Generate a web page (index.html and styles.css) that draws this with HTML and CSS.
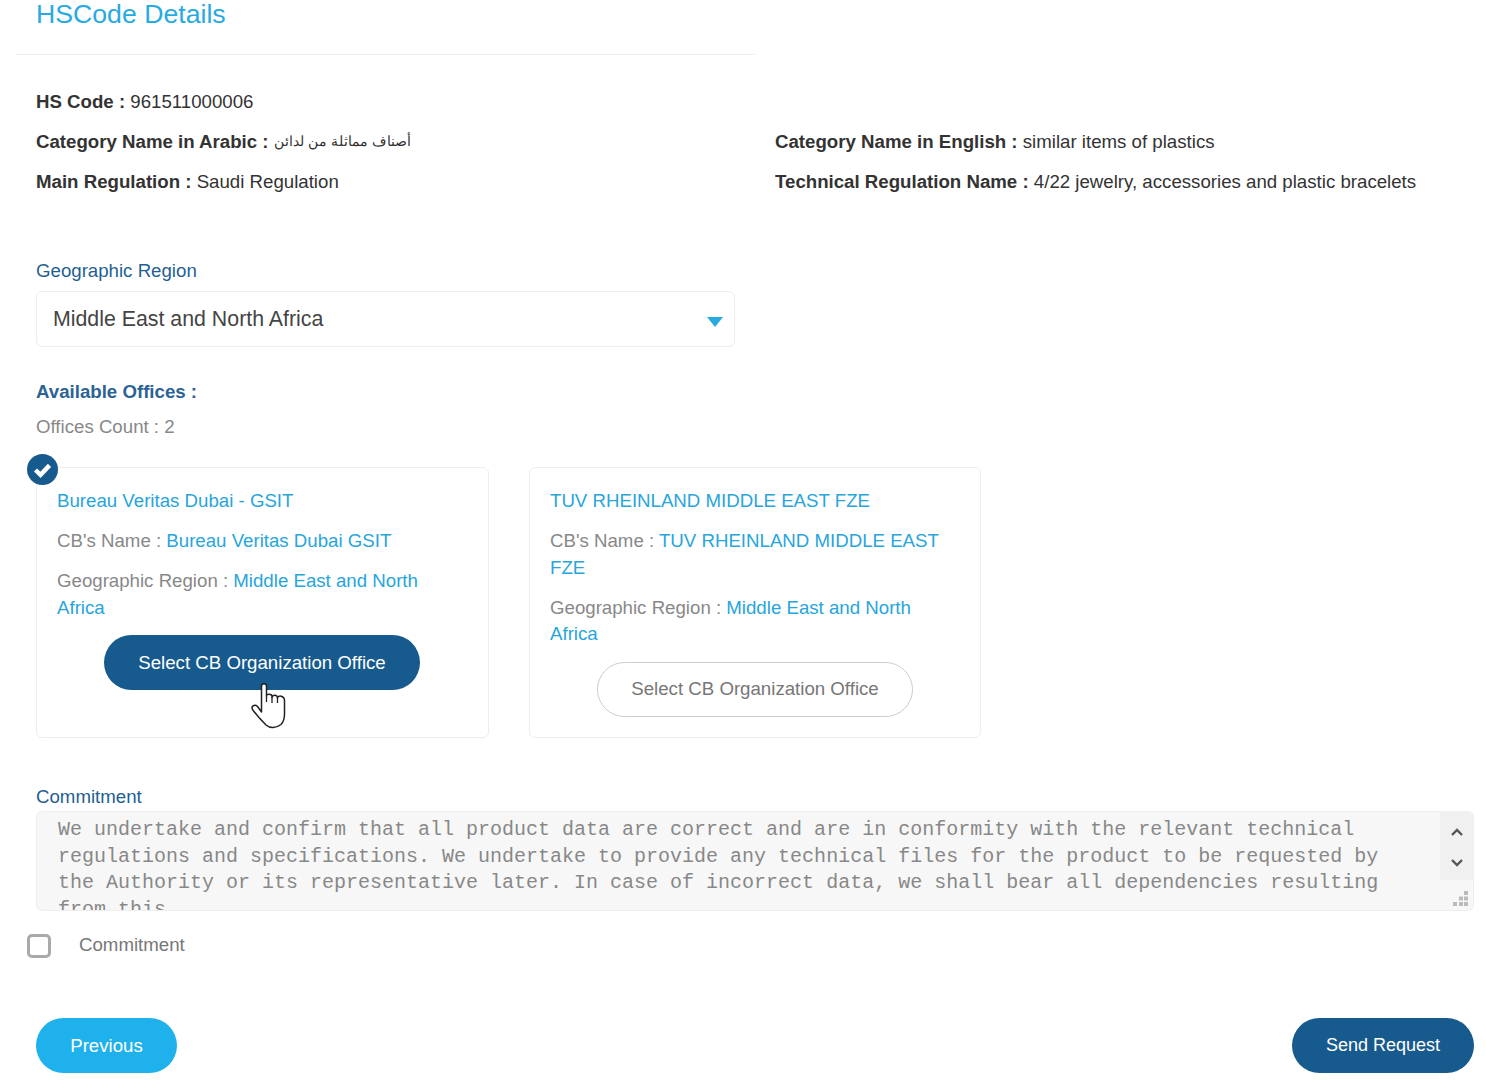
FILE: index.html
```html
<!DOCTYPE html>
<html lang="en">
<head>
    <meta charset="UTF-8">
    <meta name="viewport" content="width=device-width, initial-scale=1.0">
    <title>HSCode Details</title>
    <link rel="stylesheet" href="styles.css">
</head>
<body>
    <div class="page">
        <div class="page-head">
            <h2>HSCode Details</h2>
        </div>

        <div class="info">
            <div class="info-row"><b>HS Code :</b> 961511000006</div>
            <div class="info-row"></div>
            <div class="info-row"><b>Category Name in Arabic :</b> <span class="arabic" dir="rtl" lang="ar">أصناف مماثلة من لدائن</span></div>
            <div class="info-row"><b>Category Name in English :</b> similar items of plastics</div>
            <div class="info-row"><b>Main Regulation :</b> Saudi Regulation</div>
            <div class="info-row"><b>Technical Regulation Name :</b> 4/22 jewelry, accessories and plastic bracelets</div>
        </div>

        <label class="field-label region-label">Geographic Region</label>
        <div class="select-box">
            <span>Middle East and North Africa</span>
            <i class="caret"></i>
        </div>

        <h4 class="offices-title">Available Offices :</h4>
        <div class="offices-count">Offices Count : 2</div>

        <div class="offices">
            <div class="office selected">
                <svg class="check-badge" viewBox="0 0 31 31" width="31" height="31">
                    <circle cx="15.5" cy="15.5" r="15.5" fill="#175a8e"/>
                    <path d="M8.500 16l5 4.800 9-9.400" fill="none" stroke="#fff" stroke-width="4.500"/>
                </svg>
                <div class="office-name">Bureau Veritas Dubai - GSIT</div>
                <div class="office-line">CB's Name : <span>Bureau Veritas Dubai GSIT</span></div>
                <div class="office-line">Geographic Region : <span>Middle East and North Africa</span></div>
                <div class="office-action">
                    <button class="pill pill-dark wide">Select CB Organization Office</button>
                </div>
                <svg class="hand" viewBox="0 0 35 46" width="35" height="46">
                    <path d="M10.500 29V3C10.500 0 15.500 0 15.500 3V13C15.500 10.500 21 10.500 21 13.500V14.500C21 11.500 26.500 11.500 26.500 15C27 12 33 12.500 33.500 17L33.500 31C33.500 36 32.500 39 30 41.500C25 45.500 19 45.500 15 42C10 37 4 30 1.500 26.500C-.5 23 4 21 6.500 23.500Z" fill="#fff" stroke="#222" stroke-width="1.500" stroke-linejoin="round"/>
                    <path d="M15.500 13v6M21 14v6M26.500 15v5" fill="none" stroke="#222" stroke-width="1.300"/>
                </svg>
            </div>
            <div class="office">
                <div class="office-name">TUV RHEINLAND MIDDLE EAST FZE</div>
                <div class="office-line">CB's Name : <span>TUV RHEINLAND MIDDLE EAST FZE</span></div>
                <div class="office-line">Geographic Region : <span>Middle East and North Africa</span></div>
                <div class="office-action">
                    <button class="pill pill-outline wide">Select CB Organization Office</button>
                </div>
            </div>
        </div>

        <label class="field-label commit-label">Commitment</label>
        <div class="commit-box">
            <textarea class="commit-text" readonly>We undertake and confirm that all product data are correct and are in conformity with the relevant technical regulations and specifications. We undertake to provide any technical files for the product to be requested by the Authority or its representative later. In case of incorrect data, we shall bear all dependencies resulting from this.</textarea>
            <div class="scroll-btns">
                <svg viewBox="0 0 12 8" width="12" height="8"><path d="M1 7l5-5 5 5" fill="none" stroke="#555" stroke-width="2.400"/></svg>
                <svg viewBox="0 0 12 8" width="12" height="8"><path d="M1 1l5 5 5-5" fill="none" stroke="#555" stroke-width="2.400"/></svg>
            </div>
            <svg class="grip" viewBox="0 0 16 16" width="16" height="16">
                <path d="M11 0h4v4h-4zM6 5.500h4v4H6zM11 5.500h4v4h-4zM0 11h4v4H0zM6 11h4v4H6zM11 11h4v4h-4z" fill="#bbb"/>
            </svg>
        </div>

        <div class="commit-check">
            <span class="checkbox"></span>
            <span>Commitment</span>
        </div>

        <div class="actions">
            <button class="pill pill-light">Previous</button>
            <button class="pill pill-dark send">Send Request</button>
        </div>
    </div>
</body>
</html>
```

FILE: styles.css
```css
*{
    box-sizing: border-box;
}
body{
    margin: 0;
    background: #fff;
    font-family: "Liberation Sans", Arial, sans-serif;
    font-size: 18.67px;
    color: #333;
}
.page{
    padding: 0 12px 0 36px;
    height: 1081px;
    overflow: hidden;
}
.page-head{
    margin-left: -20px;
    width: 739px;
    height: 55px;
    padding-left: 20px;
    border-bottom: 1px solid #eee;
}
.page-head h2{
    margin: 0;
    font-size: 26.67px;
    font-weight: normal;
    line-height: 28px;
    color: #27aae1;
}
.info{
    display: grid;
    grid-template-columns: 739px 1fr;
    grid-auto-rows: 40px;
    margin-top: 27px;
}
.info-row{
    line-height: 40px;
    white-space: nowrap;
}
.arabic{
    font-size: 14.3px;
    line-height: 1;
    vertical-align: 2px;
}
.field-label{
    display: block;
    color: #1f5f93;
    line-height: 22px;
}
.region-label{
    margin-top: 58px;
}
.select-box{
    display: flex;
    align-items: center;
    justify-content: space-between;
    width: 699px;
    height: 56px;
    margin-top: 9px;
    padding: 0 11px 0 16px;
    border: 1px solid #eee;
    border-radius: 6px;
    font-size: 21.33px;
    color: #444;
}
.select-box span{
    padding-top: 1px;
}
.caret{
    width: 0;
    height: 0;
    margin-top: 6px;
    border-left: 8px solid transparent;
    border-right: 8px solid transparent;
    border-top: 10px solid #27aae1;
}
.offices-title{
    margin: 34px 0 0;
    font-size: 18.67px;
    line-height: 22px;
    color: #2b6395;
}
.offices-count{
    margin-top: 13px;
    line-height: 22px;
    color: #888;
}
.offices{
    display: flex;
    gap: 40px;
    margin-top: 29px;
}
.office{
    position: relative;
    width: 453px;
    height: 271px;
    padding: 20px 20px 0;
    border: 1px solid #eee;
    border-radius: 6px;
    color: #888;
    line-height: 26.500px;
}
.office + .office{
    width: 452px;
}
.office span,
.office-name{
    color: #27a5dc;
}
.office-line{
    margin-top: 13.500px;
}
.office-action{
    display: flex;
    justify-content: center;
    margin-top: 14px;
}
.selected .office-action{
    margin-right: 1px;
}
.check-badge{
    position: absolute;
    left: -10px;
    top: -14px;
}
.hand{
    position: absolute;
    left: 214px;
    top: 215px;
}
.pill{
    height: 55px;
    border-radius: 28px;
    font-family: inherit;
    font-size: 18.67px;
    padding: 0;
}
.wide{
    width: 316px;
}
.pill-dark{
    background: #175a8e;
    border: 0;
    color: #fff;
}
.pill-light{
    width: 141px;
    background: #1fb1ec;
    border: 0;
    color: #fff;
}
.pill-outline{
    background: #fff;
    border: 1px solid #ccc;
    color: #777;
}
.send{
    width: 182px;
    font-size: 18px;
}
.commit-label{
    margin-top: 48px;
}
.commit-box{
    position: relative;
    height: 100px;
    margin-top: 3px;
    border-radius: 6px;
    background: #f7f7f7;
    overflow: hidden;
}
.commit-text{
    display: block;
    width: 100%;
    height: 100%;
    padding: 5px 70px 0 21px;
    border: 1px solid #eee;
    border-radius: 6px;
    background: transparent;
    font-family: "Liberation Mono", "Courier New", monospace;
    font-size: 20px;
    line-height: 26.500px;
    color: #888;
    resize: none;
    overflow: hidden;
    outline: none;
}
.scroll-btns{
    position: absolute;
    top: 0;
    right: 0;
    width: 34px;
    height: 69px;
    display: flex;
    flex-direction: column;
    align-items: center;
    gap: 23px;
    padding-top: 17px;
    background: #f0f0f0;
}
.grip{
    position: absolute;
    right: 5px;
    bottom: 4px;
}
.commit-check{
    display: flex;
    align-items: flex-start;
    gap: 28px;
    margin: 23px 0 0 -9px;
    color: #777;
}
.checkbox{
    width: 24px;
    height: 24px;
    border: 3px solid #aaa;
    border-radius: 5px;
}
.actions{
    display: flex;
    justify-content: space-between;
    margin-top: 60px;
}
```
